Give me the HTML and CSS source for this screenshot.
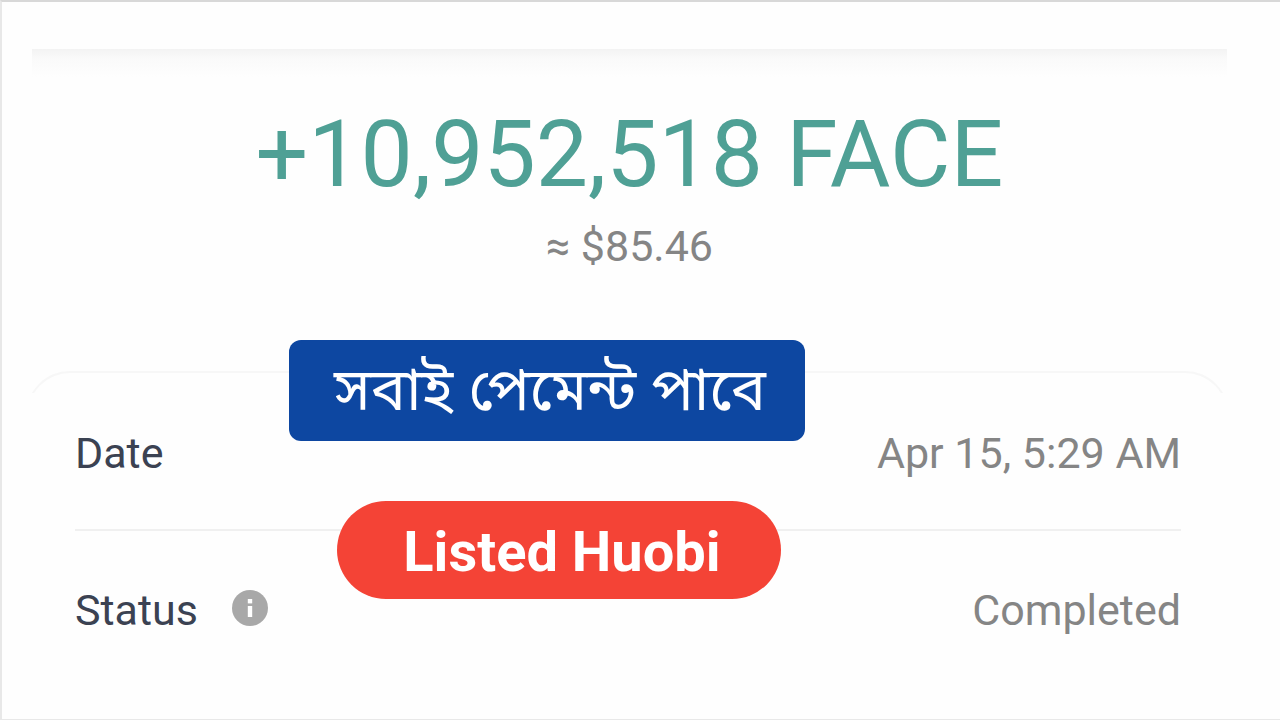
FILE: index.html
```html
<!DOCTYPE html>
<html lang="en">
<head>
    <meta charset="UTF-8">
    <meta name="viewport" content="width=device-width, initial-scale=1.0">
    <title>Transfer details</title>
    <link rel="stylesheet" href="styles.css">
</head>
<body>
    <main class="screen">
        <header class="summary">
            <h1 class="amount">+10,952,518 FACE</h1>
            <p class="fiat">≈ $85.46</p>
        </header>

        <section class="details">
            <dl class="rows">
                <div class="row">
                    <dt class="label">Date</dt>
                    <dd class="value">Apr 15, 5:29 AM</dd>
                </div>
                <div class="row">
                    <dt class="label">
                        Status
                        <button class="info" type="button" aria-label="About status">
                            <svg viewBox="0 0 36 36" width="36" height="36" aria-hidden="true">
                                <circle cx="18" cy="18" r="18" fill="#a8a8a8"/>
                                <rect x="15.8" y="9" width="4.4" height="4.4" fill="#fff"/>
                                <rect x="15.8" y="16" width="4.4" height="11" fill="#fff"/>
                            </svg>
                        </button>
                    </dt>
                    <dd class="value">Completed</dd>
                </div>
            </dl>

            <!-- Captions over the rows -->
            <p class="caption caption-blue" lang="bn">সবাই পেমেন্ট পাবে</p>
            <p class="caption caption-red">Listed Huobi</p>
        </section>
    </main>
</body>
</html>
```

FILE: styles.css
```css
* {
    box-sizing: border-box;
}

body {
    margin: 0;
    background-color: #fefefe;
    font-family: Roboto, "Noto Sans", sans-serif;
    color: #3b4252;
}

h1, p, dl, dd {
    margin: 0;
}

.screen {
    min-height: 100vh;
    padding: 47px 53px 0 30px;
    border: 2px solid #e8e8e8;
    border-top-color: #d8d8d8;
    border-right: 0;
    border-bottom-width: 1px;
}

/* Amount block with the soft shadow of the bar above */
.summary {
    padding: 56px 0 100px;
    background: linear-gradient(#f3f3f3, #fafafa 10px, #fefefe 28px) no-repeat;
    text-align: center;
}

.amount {
    font-size: 93px;
    line-height: 100px;
    font-weight: 400;
    color: #4fa095;
}

.fiat {
    margin-top: 16px;
    font-size: 43px;
    line-height: 50px;
    color: #858585;
}

.details {
    position: relative;
    padding: 3px 46px 0 43px;
}

/* Rounded top edge of the sheet, cut off at the sides */
.details::before {
    content: "";
    position: absolute;
    top: 0;
    left: -6px;
    right: -2px;
    height: 48px;
    border: 2px solid #f7f7f7;
    border-bottom: 0;
    border-radius: 44px 44px 0 0;
    clip-path: inset(0 2px 28px 6px);
}

.row {
    display: flex;
    justify-content: space-between;
    align-items: center;
    height: 157px;
    padding-top: 2px;
    border-bottom: 2px solid #f0f0f0;
    font-size: 43px;
    line-height: 50px;
}

.row:last-child {
    border-bottom-color: transparent;
}

.label {
    display: flex;
    align-items: center;
    gap: 34px;
}

.value {
    color: #858585;
}

.info {
    display: flex;
    padding: 0 0 4px;
    border: 0;
    background: none;
    cursor: pointer;
}

.caption {
    position: absolute;
    display: flex;
    align-items: center;
    justify-content: center;
    padding: 4px 0 0 6px;
    color: #fff;
    white-space: nowrap;
}

.caption-blue {
    top: -31px;
    left: 257px;
    width: 516px;
    height: 101px;
    padding-top: 8px;
    border-radius: 12px;
    background-color: #0d47a1;
    font-family: "Noto Sans Bengali", "Noto Sans", sans-serif;
    font-size: 59px;
}

.caption-red {
    top: 130px;
    left: 305px;
    width: 444px;
    height: 98px;
    border-radius: 49px;
    background-color: #f44336;
    font-size: 56px;
    font-weight: 700;
}
```
